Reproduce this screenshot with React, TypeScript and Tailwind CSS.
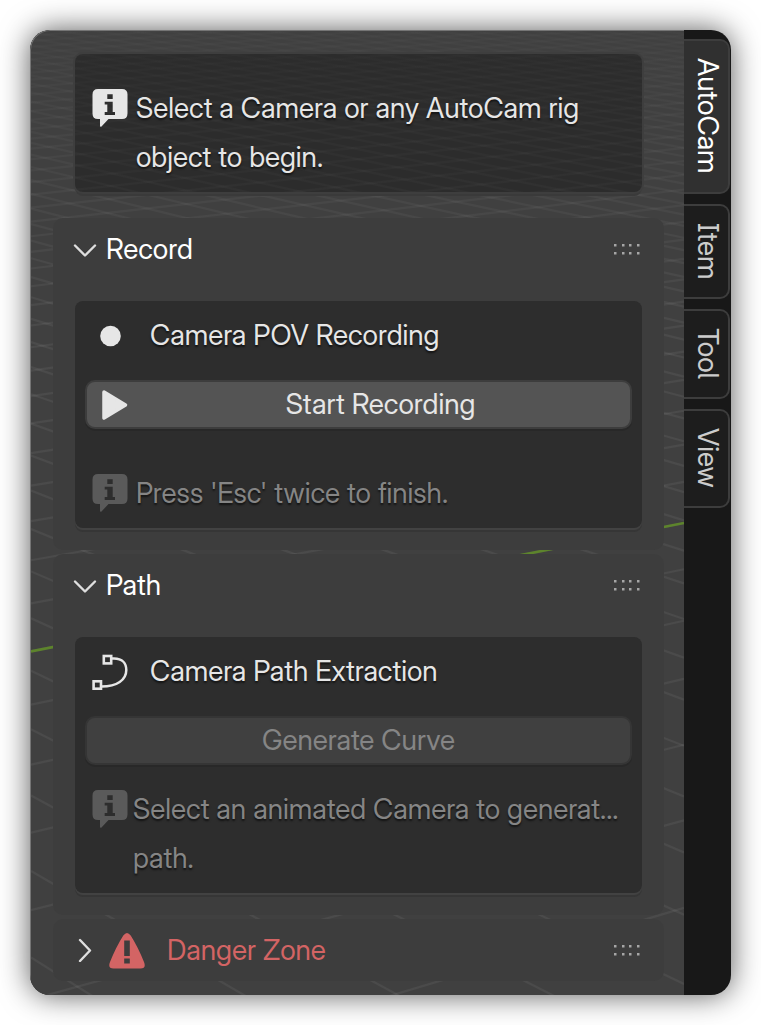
import React from "react";

type Point = [number, number];

const range = (from: number, to: number) =>
  Array.from({ length: to - from + 1 }, (_, i) => from + i);

// Perspective floor: evenly spaced ground lines converge towards the horizon.
const falling = range(-54, 9).map((k): Point => [
  -328 + 16936 / (19.49 - k),
  -304 + 21513 / (19.1 - k),
]);
const rising = range(-48, 9).map((k): Point => [
  -298 + 16705 / (18.18 - k),
  -322 + 15236 / (18.7 - k),
]);

function Floor() {
  const line = ([y1, y2]: Point, i: number) => (
    <line key={i} x1={0} y1={y1} x2={654} y2={y2} />
  );
  return (
    <svg
      className="absolute inset-0 h-full w-full"
      viewBox="0 0 654 965"
      preserveAspectRatio="none"
      aria-hidden="true"
    >
      <defs>
        <linearGradient id="floor-fade" gradientUnits="userSpaceOnUse" x1="0" y1="0" x2="0" y2="300">
          <stop offset="0" stopColor="#ffffff" stopOpacity="0.015" />
          <stop offset="1" stopColor="#ffffff" stopOpacity="0.055" />
        </linearGradient>
      </defs>
      <g stroke="url(#floor-fade)" strokeWidth={2.2}>
        {falling.map(line)}
        {rising.map(line)}
      </g>
      <line x1={0} y1={621} x2={654} y2={492.5} stroke="#5d842c" strokeWidth={2.6} />
    </svg>
  );
}

function InfoIcon({ dim = false }: { dim?: boolean }) {
  return (
    <svg
      className={dim ? "shrink-0 text-[#5a5a5a]" : "shrink-0 text-[#e6e6e6]"}
      width="36"
      height="38"
      viewBox="0 0 36 38"
      fill="currentColor"
      aria-hidden="true"
    >
      <path
        fillRule="evenodd"
        d="M6 0H30Q35.5 0 35.5 5.5V24.5Q35.5 30 30 30H16.5L9.5 37.5Q8 38.500 8 36.500V30H6Q0.500 30 0.500 24.500V5.500Q0.500 0 6 0ZM15.300 5.300V10H20.700V5.300ZM12.700 12.700V15.500H15.300V23H12.700V26H23V23H20.700V12.700Z"
      />
    </svg>
  );
}

function CurveIcon() {
  return (
    <svg width="36" height="38" viewBox="0 -1.5 36 38" fill="none" stroke="#e6e6e6" aria-hidden="true">
      <rect x="11.800" y="1.500" width="7.400" height="7.400" strokeWidth="2.600" />
      <rect x="1.600" y="26.800" width="7.400" height="7.400" strokeWidth="2.600" />
      <path d="M19.500 4H22C30.500 4 34.300 9 34.300 15.500C34.300 25.500 25 32 9.500 32" strokeWidth="2.500" />
    </svg>
  );
}

function Chevron({ open }: { open: boolean }) {
  return (
    <svg
      width="24"
      height="24"
      viewBox="0 0 24 24"
      fill="none"
      stroke="#dedede"
      strokeWidth="2.400"
      strokeLinecap="round"
      strokeLinejoin="round"
      aria-hidden="true"
    >
      <path d={open ? "M2 8.500L12 18.500L22 8.500" : "M7 2L17 12.500L7 23"} />
    </svg>
  );
}

function WarningIcon() {
  return (
    <svg width="36" height="38" viewBox="0 -2 36 38" aria-hidden="true">
      <path
        fill="#d36464"
        fillRule="evenodd"
        d="M14.300 2.500Q18 -2.500 21.700 2.500Q29 14 35 29Q37.500 35.500 31.500 35.500H4.500Q-1.500 35.500 1 29Q7 14 14.300 2.500ZM15.200 7.500V23H20.800V7.500ZM15.200 25.500V30.500H20.800V25.500Z"
      />
    </svg>
  );
}

function Grip() {
  return (
    <svg width="26" height="12" viewBox="0 0 26 12" fill="#a6a6a6" aria-hidden="true">
      {[0, 8].map((y) =>
        [0, 8, 15, 23].map((x) => <rect key={`${x}-${y}`} x={x} y={y + 1} width="2.500" height="2.500" />)
      )}
    </svg>
  );
}

function PanelHeader({ open, children }: { open: boolean; children: React.ReactNode }) {
  return (
    <h2 className="flex h-[62px] items-center pr-6 pl-5">
      <button type="button" aria-expanded={open} className="flex flex-1 items-center gap-[9px] text-left">
        <Chevron open={open} />
        {children}
      </button>
      <Grip />
    </h2>
  );
}

function Panel({ title, children }: { title: string; children: React.ReactNode }) {
  return (
    <section className="rounded-[10px] bg-[#3d3d3d] px-[22px] pb-[22px]">
      <div className="-mx-[22px] mb-[21px]">
        <PanelHeader open>
          <span className="text-white">{title}</span>
        </PanelHeader>
      </div>
      <div className="rounded-lg bg-[#2d2d2d] p-[10px] shadow-[0_2px_0_#424242,0_4px_0_#363636]">
        {children}
      </div>
    </section>
  );
}

function BoxLabel({ icon, children }: { icon: React.ReactNode; children: React.ReactNode }) {
  return (
    <div className="mb-5 flex items-center pl-[7px]">
      <span className="flex w-[58px]">{icon}</span>
      {children}
    </div>
  );
}

const tabs = ["AutoCam", "Item", "Tool", "View"];

export default function App() {
  return (
    <main className="p-[30px] font-['Inter_Display',Inter,sans-serif] text-[28px] leading-[49px] text-[#e6e6e6] [text-shadow:0_2px_2px_rgb(0_0_0/0.6)]">
      <div className="flex overflow-hidden rounded-[20px] bg-[#181818] shadow-[0_0_30px_rgb(0_0_0/0.65)]">
        <div className="relative min-w-0 flex-1 rounded-tl-[20px] border-t border-l border-[#757575] bg-[#404040]">
          <Floor />
          <div className="relative flex flex-col gap-1 pt-[23px] pr-5 pb-[14px] pl-[22px]">
            <div className="mx-[22px] mb-[22px] flex items-start rounded-lg bg-black/30 px-[17px] pt-[30px] pb-[10px] shadow-[0_0_0_2px_#3e3e3e,0_4px_0_#3a3a3a]">
              <span className="mt-[5px] mr-2 flex">
                <InfoIcon />
              </span>
              <p>
                Select a Camera or any AutoCam rig
                <br />
                object to begin.
              </p>
            </div>

            <Panel title="Record">
              <BoxLabel
                icon={
                  <svg width="36" height="36" viewBox="0 0 36 36" aria-hidden="true">
                    <circle cx="18.500" cy="18" r="10.300" fill="#e6e6e6" />
                  </svg>
                }
              >
                Camera POV Recording
              </BoxLabel>
              <button
                type="button"
                className="relative flex h-[49px] w-full items-center justify-center rounded-[10px] border-2 border-[#3d3d3d] bg-[#545454] pl-11 shadow-[0_2px_0_#282828]"
              >
                <svg className="absolute left-[15px]" width="26" height="32" viewBox="0 0 26 32" aria-hidden="true">
                  <path
                    d="M2 3L23.500 16L2 29Z"
                    fill="#e6e6e6"
                    stroke="#e6e6e6"
                    strokeWidth="3.500"
                    strokeLinejoin="round"
                  />
                </svg>
                Start Recording
              </button>
              <div className="mt-10 flex items-start pl-[7px] text-[#858585]">
                <span className="mt-[5px] mr-2 flex">
                  <InfoIcon dim />
                </span>
                <p>Press 'Esc' twice to finish.</p>
              </div>
            </Panel>

            <Panel title="Path">
              <BoxLabel icon={<CurveIcon />}>Camera Path Extraction</BoxLabel>
              <button
                type="button"
                disabled
                className="flex h-[49px] w-full items-center justify-center rounded-[10px] border-2 border-[#353535] bg-[#404040] text-[#858585] shadow-[0_2px_0_#282828]"
              >
                Generate Curve
              </button>
              <div className="mt-5 flex items-start pl-[7px] text-[#858585]">
                <span className="mt-[5px] mr-[5px] flex">
                  <InfoIcon dim />
                </span>
                <p className="whitespace-nowrap">
                  Select an animated Camera to generat...
                  <br />
                  path.
                </p>
              </div>
            </Panel>

            <section className="rounded-[10px] bg-[#3d3d3d]">
              <PanelHeader open={false}>
                <span className="flex items-center gap-[22px] pl-[3px] text-[#d36464]">
                  <WarningIcon />
                  Danger Zone
                </span>
              </PanelHeader>
            </section>
          </div>
        </div>

        <nav className="flex w-[47px] flex-col gap-[10px] pt-[9px] pr-px [text-shadow:none]" aria-label="Sidebar tabs">
          {tabs.map((tab, i) => (
            <button
              key={tab}
              type="button"
              aria-pressed={i === 0}
              className={
                "flex items-center justify-center rounded-r-[10px] border-t-2 border-r-2 border-b-2 border-[#3d3d3d] pt-[17px] pb-[18px] pl-1 leading-10 [font-feature-settings:'ss02'] [writing-mode:vertical-rl] " +
                (i === 0 ? "bg-[#303030] text-white" : "bg-[#1d1d1d] text-[#cccccc]")
              }
            >
              {tab}
            </button>
          ))}
        </nav>
      </div>
    </main>
  );
}
